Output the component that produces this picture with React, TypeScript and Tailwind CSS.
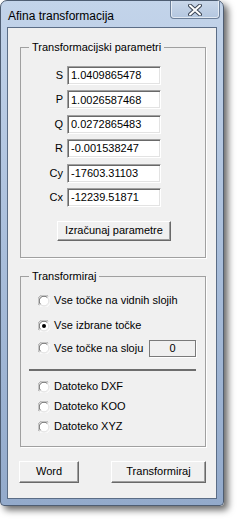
import React from 'react'

const params = [
  { label: 'S', value: '1.0409865478' },
  { label: 'P', value: '1.0026587468' },
  { label: 'Q', value: '0.0272865483' },
  { label: 'R', value: '-0.001538247' },
  { label: 'Cy', value: '-17603.31103' },
  { label: 'Cx', value: '-12239.51871' },
]

function Radio({ checked = false }: { checked?: boolean }) {
  return (
    <svg width="12" height="12" viewBox="0 0 12 12" className="shrink-0">
      <circle cx="6" cy="6" r="5" fill="#ffffff" />
      <path d="M1.5 10.5 A6 6 0 0 1 10.5 1.5" stroke="#a0a0a0" strokeWidth="1" fill="none" />
      <path d="M2.6 9.4 A4.8 4.8 0 0 1 9.4 2.6" stroke="#696969" strokeWidth="1" fill="none" />
      <path d="M10.5 1.5 A6 6 0 0 1 1.5 10.5" stroke="#ffffff" strokeWidth="1" fill="none" />
      <path d="M9.4 2.6 A4.8 4.8 0 0 1 2.6 9.4" stroke="#e3e3e3" strokeWidth="1" fill="none" />
      {checked && <circle cx="6" cy="6" r="2" fill="#000000" />}
    </svg>
  )
}

function RadioRow({ label, checked, children }: { label: string; checked?: boolean; children?: React.ReactNode }) {
  return (
    <div className="flex items-center h-[16px] pl-[17px]">
      <Radio checked={checked} />
      <span className="ml-[4px] leading-[13px]">{label}</span>
      {children}
    </div>
  )
}

function Button({ label, className }: { label: string; className: string }) {
  return (
    <button
      className={
        'bg-[#f0f0f0] border border-t-white border-l-white border-b-[#696969] border-r-[#696969] shadow-[inset_-1px_-1px_0_#a0a0a0] leading-none ' +
        className
      }
    >
      {label}
    </button>
  )
}

export default function App() {
  return (
    <div
      className="w-[237px] h-[520px] bg-white text-black text-[11px]"
      style={{ fontFamily: '"Liberation Sans", Arial, sans-serif' }}
    >
      {/* okno */}
      <div className="w-[224px] h-[506px] flex flex-col rounded-t-[7px] rounded-b-[4px] border border-[#4e5d72] bg-gradient-to-b from-[#c3d4ea] via-[#a9bedb] to-[#93aacb] shadow-[4px_4px_7px_rgba(0,0,0,0.6)]">
        {/* naslovna vrstica */}
        <div className="h-[26px] flex items-start justify-between">
          <span className="pl-[7px] pt-[8px] text-[12px] leading-[14px]">Afina transformacija</span>
          <div className="mr-[3px] w-[50px] h-[18px] flex items-center justify-center rounded-b-[4px] border border-t-0 border-[#6c7f99] bg-gradient-to-b from-[#c9d7ea] to-[#b3c6df] shadow-[inset_0_-1px_0_rgba(255,255,255,0.6),inset_1px_0_0_rgba(255,255,255,0.6),inset_-1px_0_0_rgba(255,255,255,0.6)]">
            <svg width="14" height="12" viewBox="0 0 14 12">
              <path d="M2 1.5 L12 10.5 M12 1.5 L2 10.5" stroke="#3c4656" strokeWidth="4" strokeLinecap="round" />
              <path d="M2 1.5 L12 10.5 M12 1.5 L2 10.5" stroke="#ffffff" strokeWidth="2" strokeLinecap="round" />
            </svg>
          </div>
        </div>

        {/* delovna povrsina */}
        <div className="mx-[6px] h-[472px] border border-[#5b6d86] bg-[#f0f0f0] flex flex-col pl-[12px] pr-[10px] pt-[13px]">
          <fieldset className="border border-[#a0a0a0] shadow-[1px_1px_0_#ffffff] pt-[12px] pb-[16px]">
            <legend className="ml-[8px] px-[3px] leading-[13px]">Transformacijski parametri</legend>
            <div className="flex flex-col gap-[5.4px]">
              {params.map((p) => (
                <div key={p.label} className="flex items-center">
                  <span className="w-[42px] text-right leading-[13px]">{p.label}</span>
                  <div className="ml-[4px] w-[94px] h-[19px] bg-white flex items-center pl-[3px] border border-t-[#a0a0a0] border-l-[#a0a0a0] border-b-white border-r-white shadow-[inset_1px_1px_0_#696969,inset_-1px_-1px_0_#e3e3e3]">
                    {p.value}
                  </div>
                </div>
              ))}
            </div>
            <div className="flex justify-center mt-[14px] pl-[2px]">
              <Button label="Izračunaj parametre" className="w-[114px] h-[20px]" />
            </div>
          </fieldset>

          <fieldset className="mt-[12px] border border-[#a0a0a0] shadow-[1px_1px_0_#ffffff] pt-[10px] pb-[11px]">
            <legend className="ml-[8px] px-[3px] leading-[13px]">Transformiraj</legend>
            <RadioRow label="Vse točke na vidnih slojih" />
            <div className="mt-[9px]">
              <RadioRow label="Vse izbrane točke" checked />
            </div>
            <div className="mt-[6px] flex items-center h-[17px]">
              <RadioRow label="Vse točke na sloju" />
              <div className="ml-auto mr-[9px] w-[47px] h-[17px] flex items-center justify-center border border-[#7a7a7a] shadow-[1px_1px_0_#ffffff]">
                0
              </div>
            </div>
            <div className="mt-[12px] ml-[8px] mr-[9px] h-[2px] bg-[#6d6d6d]" />
            <div className="mt-[8px] flex flex-col gap-[4px]">
              <RadioRow label="Datoteko DXF" />
              <RadioRow label="Datoteko KOO" />
              <RadioRow label="Datoteko XYZ" />
            </div>
          </fieldset>

          <div className="mt-[14px] -ml-px flex justify-between">
            <Button label="Word" className="w-[60px] h-[22px]" />
            <Button label="Transformiraj" className="w-[95px] h-[22px]" />
          </div>
        </div>
      </div>
    </div>
  )
}
